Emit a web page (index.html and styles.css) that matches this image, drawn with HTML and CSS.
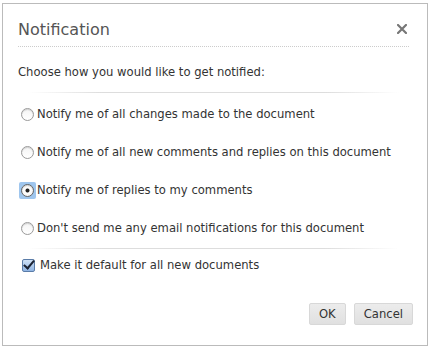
FILE: index.html
```html
<!DOCTYPE html>
<html lang="en">
<head>
    <meta charset="UTF-8">
    <title>Notification</title>
    <link rel="stylesheet" href="styles.css">
</head>
<body>
    <!-- Notification Dialog -->
    <div class="dialog">
        <div class="dialog-header">
            <h1>Notification</h1>
            <svg class="close" width="10" height="10" viewBox="0 0 10 10">
                <path d="M1 1 L9 9 M9 1 L1 9" stroke="#777" stroke-width="2.2" stroke-linecap="square"/>
            </svg>
        </div>

        <p class="intro">Choose how you would like to get notified:</p>
        <div class="separator"></div>

        <!-- Options -->
        <div class="options">
            <label class="option">
                <input type="radio" name="notify" value="all">
                <span>Notify me of all changes made to the document</span>
            </label>
            <label class="option">
                <input type="radio" name="notify" value="comments">
                <span>Notify me of all new comments and replies on this document</span>
            </label>
            <label class="option">
                <span class="focus-ring"><input type="radio" name="notify" value="replies" checked></span>
                <span>Notify me of replies to my comments</span>
            </label>
            <label class="option">
                <input type="radio" name="notify" value="none">
                <span>Don't send me any email notifications for this document</span>
            </label>
        </div>
        <div class="separator"></div>

        <label class="option default">
            <input type="checkbox" checked>
            <span>Make it default for all new documents</span>
        </label>

        <!-- Buttons -->
        <div class="btn-container">
            <button>OK</button>
            <button>Cancel</button>
        </div>
    </div>
</body>
</html>
```

FILE: styles.css
```css
* {
    margin: 0;
    padding: 0;
    box-sizing: border-box;
}

body {
    font-family: "DejaVu Sans", Verdana, sans-serif;
    background-color: #fff;
    color: #333;
}

/* Dialog */
.dialog {
    margin: 3px 0 0 2px;
    width: 426px;
    height: 343px;
    border: 1px solid #bbb;
    padding: 0 18px 0 15px;
}

.dialog-header {
    display: flex;
    justify-content: space-between;
    align-items: center;
    height: 43px;
    padding-top: 9px;
    border-bottom: 1px dotted #ccc;
}

h1 {
    font-size: 16px;
    font-weight: normal;
    color: #555;
}

.close {
    margin-right: 2px;
    margin-top: -2px;
}

.intro {
    font-size: 11.6px;
    margin-top: 18px;
    line-height: 15px;
}

.separator {
    height: 1px;
    margin: 0 10px;
    background: linear-gradient(to right, rgba(220, 220, 220, 0), #ddd 20%, #ddd 80%, rgba(220, 220, 220, 0));
}

.intro + .separator {
    margin-top: 12px;
}

/* Options */
.options {
    padding-top: 14px;
    padding-bottom: 12px;
}

.option {
    display: flex;
    align-items: center;
    font-size: 11.6px;
    line-height: 15px;
    height: 15px;
    margin-bottom: 23px;
    margin-left: 3px;
}

.options .option:last-child {
    margin-bottom: 0;
}

.option input {
    appearance: none;
    -webkit-appearance: none;
    width: 13px;
    height: 13px;
    margin-right: 3px;
    flex-shrink: 0;
}

.option input[type="radio"] {
    border-radius: 50%;
    border: 1px solid #9a9a9a;
    background: linear-gradient(#f4f4f4, #fff);
    box-shadow: inset 0 1px 1px rgba(0, 0, 0, 0.15);
}

.option input[type="radio"]:checked {
    background: radial-gradient(circle, #222 0, #222 1.6px, #fff 2.4px, #eee 100%);
    border-color: #666;
}

.focus-ring {
    display: flex;
    margin: -2px 1px -2px -2px;
    padding: 2px;
    background-color: #9fc6ee;
    border-radius: 2px;
}

.focus-ring input {
    margin-right: 0;
}

.default {
    margin-top: 9px;
    margin-left: 4px;
}

.option input[type="checkbox"] {
    border: 1px solid #5a7ca8;
    border-radius: 2px;
    background: linear-gradient(#cfe1f6, #8fb4e3) no-repeat;
    position: relative;
    margin-right: 5px;
}

.option input[type="checkbox"]:checked::after {
    content: "";
    position: absolute;
    left: 3px;
    top: -2px;
    width: 4px;
    height: 9px;
    border: solid #1a2233;
    border-width: 0 2px 2px 0;
    transform: rotate(40deg);
}

/* Buttons */
.btn-container {
    display: flex;
    justify-content: flex-end;
    gap: 8px;
    margin-top: 30px;
    margin-right: -4px;
}

.btn-container button {
    font-family: inherit;
    font-size: 11.6px;
    color: #333;
    height: 22px;
    padding: 0 9px;
    border: 1px solid #d8d8d8;
    border-radius: 2px;
    background: linear-gradient(#ececec, #e0e0e0);
}
```
